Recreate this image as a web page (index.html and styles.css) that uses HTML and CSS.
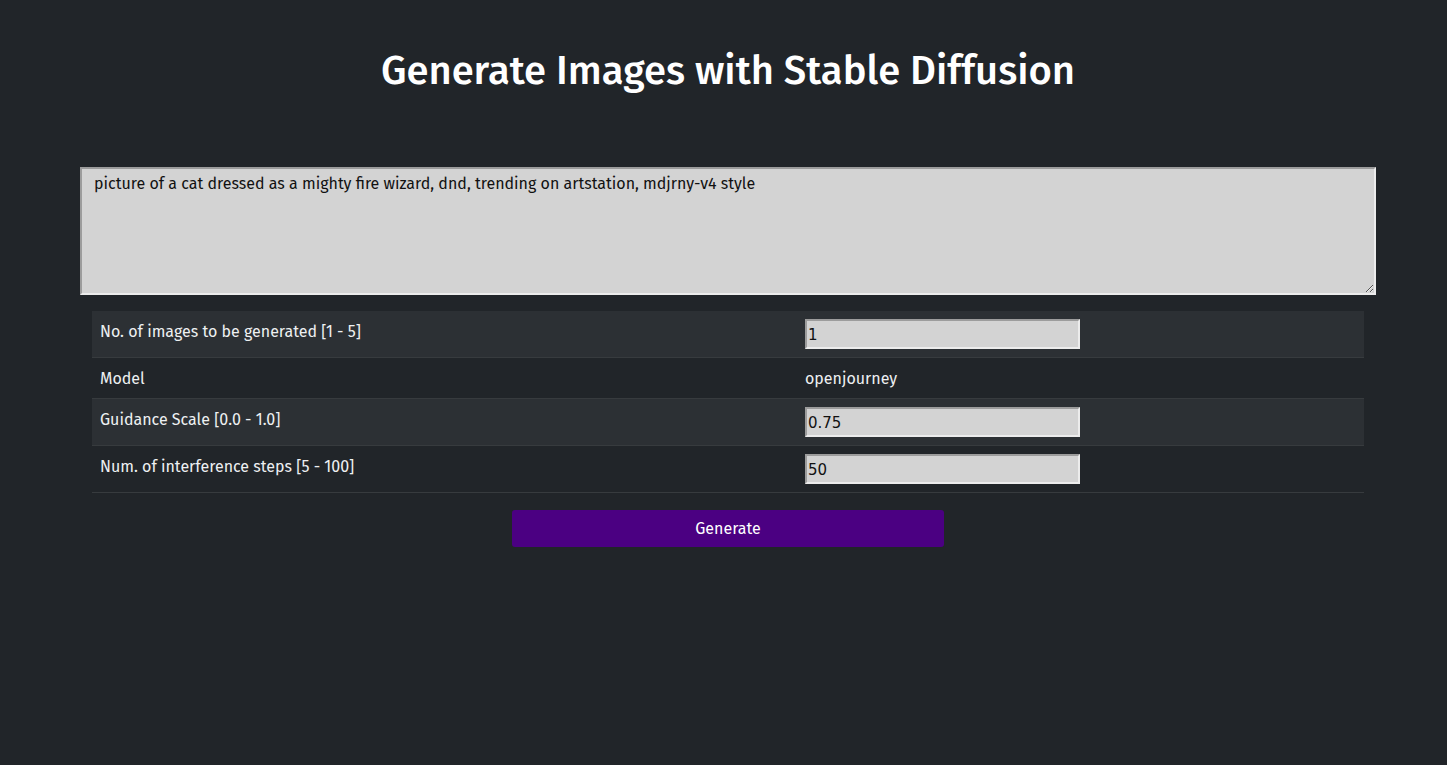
FILE: index.html
```html
<!DOCTYPE html>
<html lang="en">
<head>
<meta charset="utf-8">
<title>Generate Images with Stable Diffusion</title>
<link rel="stylesheet" href="styles.css">
</head>
<body>
<main class="page">
  <h1 class="title">Generate Images with Stable Diffusion</h1>
  <form class="gen-form">
    <textarea class="prompt">picture of a cat dressed as a mighty fire wizard, dnd, trending on artstation, mdjrny-v4 style</textarea>
    <table class="opts">
      <tbody>
        <tr class="striped">
          <td class="lbl">No. of images to be generated [1 - 5]</td>
          <td class="val has-field"><input class="field" type="text" value="1"></td>
        </tr>
        <tr>
          <td class="lbl">Model</td>
          <td class="val">openjourney</td>
        </tr>
        <tr class="striped">
          <td class="lbl">Guidance Scale [0.0 - 1.0]</td>
          <td class="val has-field"><input class="field" type="text" value="0.75"></td>
        </tr>
        <tr>
          <td class="lbl">Num. of interference steps [5 - 100]</td>
          <td class="val has-field"><input class="field" type="text" value="50"></td>
        </tr>
      </tbody>
    </table>
    <div class="actions">
      <button class="btn" type="button">Generate</button>
    </div>
  </form>
</main>
</body>
</html>
```
FILE: styles.css
```css
html, body {
  margin: 0;
  padding: 0;
  background: #212529;
}
body {
  font-family: "Fira Sans", "Open Sans", sans-serif;
  color: #eef0f2;
  font-size: 16px;
  line-height: 24px;
  min-height: 765px;
}
.page {
  padding: 50px 71px 0 80px;
}
.title {
  margin: 0;
  text-align: center;
  color: #ffffff;
  font-size: 40px;
  line-height: 42px;
  font-weight: 500;
}
.gen-form {
  margin-top: 75px;
}
.prompt {
  display: block;
  box-sizing: border-box;
  width: 100%;
  height: 128px;
  margin: 0;
  padding: 3px 12px 5px;
  background: #d3d3d3;
  color: #111111;
  font-family: inherit;
  font-size: 16px;
  line-height: 24px;
  border-style: solid;
  border-width: 2px;
  border-color: #9c9c9c #ececec #ececec #9c9c9c;
}
.opts {
  margin: 16px 12px 0;
  width: calc(100% - 24px);
  border-collapse: collapse;
}
.opts td {
  padding: 9px 8px 7px;
  vertical-align: top;
  border-bottom: 1px solid #373b3e;
}
.opts td.has-field {
  padding: 8px;
}
.opts tr.striped td {
  background: #2c3034;
}
.lbl {
  width: 689px;
}
.field {
  display: block;
  box-sizing: border-box;
  width: 275px;
  height: 30px;
  margin: 0;
  padding: 2px 1px 0;
  background: #d3d3d3;
  color: #111;
  font-family: "DejaVu Sans", sans-serif;
  font-size: 15px;
  border-style: solid;
  border-width: 2px;
  border-color: #9c9c9c #ececec #ececec #9c9c9c;
}
.actions {
  display: flex;
  justify-content: center;
  margin-top: 17px;
}
.btn {
  width: 432px;
  height: 37px;
  background: #4b0082;
  color: #ffffff;
  border: none;
  border-radius: 3px;
  font-family: inherit;
  font-size: 16px;
}
```
